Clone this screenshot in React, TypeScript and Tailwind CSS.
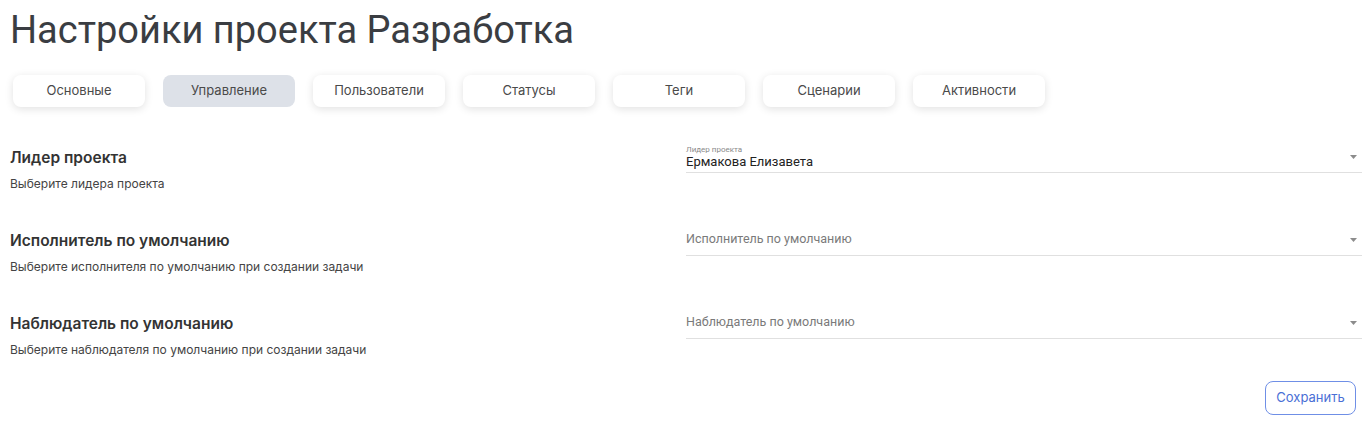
import React from "react";

const tabs = ["Основные", "Управление", "Пользователи", "Статусы", "Теги", "Сценарии", "Активности"];

function Arrow() {
  return (
    <svg width="7" height="4" viewBox="0 0 7 4" className="shrink-0 mr-[2px]">
      <path d="M0 0 L7 0 L3.5 4 Z" fill="#8c8c8c" />
    </svg>
  );
}

function Row({ title, desc, label, value }: { title: string; desc: string; label?: string; value: string }) {
  return (
    <div className="flex h-[83px]">
      <div className="w-[676px] pt-[15px]">
        <div className="text-[15.5px] leading-[20px] font-semibold text-[#333]" style={{ fontFamily: "Inter, sans-serif" }}>{title}</div>
        <div className="mt-[8px] text-[12px] leading-[16px] text-[#444]" style={{ fontFamily: "Inter, sans-serif" }}>{desc}</div>
      </div>
      <div className="w-[676px] pt-[9px]">
        <div className="flex items-center justify-between h-[31px] border-b border-[#e0e0e0] pr-[3px]" style={{ fontFamily: "Roboto, sans-serif" }}>
          {label ? (
            <div className="flex flex-col self-start pt-[2px]">
              <span className="text-[8px] leading-[11px] text-[#8a8a8a]">{label}</span>
              <span className="text-[13px] leading-[14px] text-[#222]">{value}</span>
            </div>
          ) : (
            <span className="text-[12.5px] leading-[16px] text-[#7a7a7a] -mt-[2px]">{value}</span>
          )}
          <Arrow />
        </div>
      </div>
    </div>
  );
}

export default function App() {
  return (
    <div className="w-[1367px] h-[422px] bg-white pl-[10px] pr-[5px]">
      <h1 className="pt-[8px] text-[38px] leading-[44px] text-[#3a3d42]" style={{ fontFamily: "Roboto, sans-serif" }}>
        Настройки проекта Разработка
      </h1>
      <div className="flex gap-[18px] mt-[23px] pl-[3px]">
        {tabs.map((t, i) => (
          <div
            key={t}
            className={
              "w-[132px] h-[32px] rounded-[8px] flex items-center justify-center text-[13px] text-[#4a4a4a] " +
              (i === 1 ? "bg-[#dde1e8]" : "bg-white shadow-[0_2px_8px_rgba(0,0,0,0.12)]")
            }
            style={{ fontFamily: "Inter, sans-serif" }}
          >
            {t}
          </div>
        ))}
      </div>
      <div className="mt-[26px]">
        <Row title="Лидер проекта" desc="Выберите лидера проекта" label="Лидер проекта" value="Ермакова Елизавета" />
        <Row title="Исполнитель по умолчанию" desc="Выберите исполнителя по умолчанию при создании задачи" value="Исполнитель по умолчанию" />
        <Row title="Наблюдатель по умолчанию" desc="Выберите наблюдателя по умолчанию при создании задачи" value="Наблюдатель по умолчанию" />
      </div>
      <div className="flex justify-end pr-[6px] -mt-[1px]">
        <button
          className="w-[91px] h-[34px] rounded-[8px] border border-[#6f8fe6] text-[#4a6fd6] text-[13px] bg-white"
          style={{ fontFamily: "Inter, sans-serif" }}
        >
          Сохранить
        </button>
      </div>
    </div>
  );
}
